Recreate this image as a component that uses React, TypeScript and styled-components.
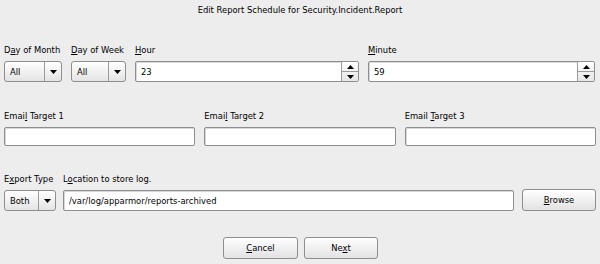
import React from "react";
import styled, { createGlobalStyle } from "styled-components";

const GlobalStyle = createGlobalStyle`
  html, body {
    margin: 0;
    padding: 0;
    background: #ededed;
  }
  body {
    font-family: "DejaVu Sans", "Liberation Sans", sans-serif;
    font-size: 8.4px;
    color: #000000;
  }
`
const Dialog = styled.div`
  width: 600px;
  height: 264px;
  box-sizing: border-box;
  padding: 4px 4px 0 4px;
  display: flex;
  flex-direction: column;
  background: #ededed;
`
const Title = styled.div`
  text-align: center;
  height: 12px;
  line-height: 12px;
  margin-bottom: 28px;
`
const Row = styled.div<{ $gap: number; $bottom: number }>`
  display: flex;
  align-items: flex-end;
  gap: ${p => p.$gap}px;
  margin-bottom: ${p => p.$bottom}px;
`
const Field = styled.div<{ $width?: number }>`
  display: flex;
  flex-direction: column;
  ${p => p.$width ? `width: ${p.$width}px; flex: none;` : "flex: 1;"}
`
const Label = styled.label`
  height: 12px;
  line-height: 12px;
  margin-bottom: 5px;
  white-space: nowrap;

  & u {
    text-decoration: underline;
    text-underline-offset: 1px;
  }
`
const Entry = styled.div<{ $height: number }>`
  height: ${p => p.$height}px;
  box-sizing: border-box;
  border: 1px solid #8e8e8e;
  border-radius: 2px;
  background: #ffffff;
  display: flex;
  align-items: stretch;
  box-shadow: inset 1px 1px 0 #d8d8d8;
  overflow: hidden;
`
const EntryText = styled.div`
  flex: 1;
  padding-left: 5px;
  display: flex;
  align-items: center;
`
const Combo = styled.div<{ $height: number }>`
  height: ${p => p.$height}px;
  box-sizing: border-box;
  border: 1px solid #8e8e8e;
  border-radius: 3px;
  background: linear-gradient(#ffffff, #e4e4e4);
  display: flex;
  align-items: stretch;
`
const ComboText = styled.div`
  flex: 1;
  padding-left: 5px;
  display: flex;
  align-items: center;
  border-right: 1px solid #9a9a9a;
`
const ComboArrow = styled.div`
  width: 16px;
  display: flex;
  align-items: center;
  justify-content: center;
`
const SpinButtons = styled.div`
  width: 16px;
  border-left: 1px solid #9a9a9a;
  display: flex;
  flex-direction: column;
  background: linear-gradient(#ffffff, #e6e6e6);
`
const SpinHalf = styled.div<{ $top?: boolean }>`
  flex: 1;
  display: flex;
  align-items: center;
  justify-content: center;
  ${p => p.$top ? "border-bottom: 1px solid #9a9a9a;" : ""}
`
const Button = styled.div<{ $width: number; $height: number }>`
  width: ${p => p.$width}px;
  height: ${p => p.$height}px;
  box-sizing: border-box;
  border: 1px solid #8e8e8e;
  border-radius: 3px;
  background: linear-gradient(#ffffff, #e2e2e2);
  display: flex;
  align-items: center;
  justify-content: center;
  flex: none;
`
const ButtonBar = styled.div`
  display: flex;
  justify-content: center;
  gap: 6px;
  padding-left: 1px;
`

const Arrow = ({ up }: { up?: boolean }) => (
  <svg width="7" height="4" viewBox="0 0 7 4">
    <path d={up ? "M0 4 L3.5 0 L7 4 Z" : "M0 0 L7 0 L3.5 4 Z"} fill="#000" />
  </svg>
)

// dropdown with a value on the left and a small arrow on the right
const ComboBox = (props: { value: string; height: number }) => (
  <Combo $height={props.height}>
    <ComboText>{props.value}</ComboText>
    <ComboArrow><Arrow /></ComboArrow>
  </Combo>
)

const SpinBox = (props: { value: string }) => (
  <Entry $height={21}>
    <EntryText>{props.value}</EntryText>
    <SpinButtons>
      <SpinHalf $top><Arrow up /></SpinHalf>
      <SpinHalf><Arrow /></SpinHalf>
    </SpinButtons>
  </Entry>
)

const App = () => {
  return (
    <Dialog>
      <GlobalStyle />
      <Title>Edit Report Schedule for Security.Incident.Report</Title>
      <Row $gap={9} $bottom={28}>
        <Field $width={58}>
          <Label>D<u>a</u>y of Month</Label>
          <ComboBox value="All" height={21} />
        </Field>
        <Field $width={55}>
          <Label><u>D</u>ay of Week</Label>
          <ComboBox value="All" height={21} />
        </Field>
        <Field $width={224}>
          <Label><u>H</u>our</Label>
          <SpinBox value="23" />
        </Field>
        <Field $width={227}>
          <Label><u>M</u>inute</Label>
          <SpinBox value="59" />
        </Field>
      </Row>
      <Row $gap={9} $bottom={27}>
        <Field>
          <Label>Emai<u>l</u> Target 1</Label>
          <Entry $height={19} />
        </Field>
        <Field>
          <Label>Emai<u>l</u> Target 2</Label>
          <Entry $height={19} />
        </Field>
        <Field>
          <Label>Email <u>T</u>arget 3</Label>
          <Entry $height={19} />
        </Field>
      </Row>
      <Row $gap={7} $bottom={26}>
        <Field $width={52}>
          <Label>E<u>x</u>port Type</Label>
          <ComboBox value="Both" height={21} />
        </Field>
        <Field>
          <Label>L<u>o</u>cation to store log.</Label>
          <Entry $height={21}>
            <EntryText>/var/log/apparmor/reports-archived</EntryText>
          </Entry>
        </Field>
        <Button $width={74} $height={22} style={{ marginLeft: 1 }}><span><u>B</u>rowse</span></Button>
      </Row>
      <ButtonBar>
        <Button $width={75} $height={22}><span><u>C</u>ancel</span></Button>
        <Button $width={74} $height={22}><span>Ne<u>x</u>t</span></Button>
      </ButtonBar>
    </Dialog>
  );
}

export default App;
